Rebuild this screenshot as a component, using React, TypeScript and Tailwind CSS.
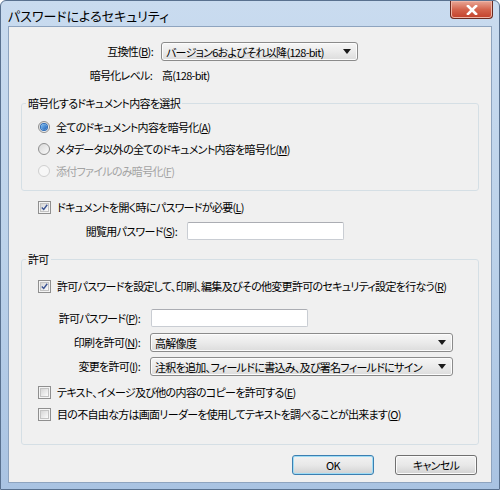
import React from "react";

function Combo({ value, width }: { value: string; width: string }) {
  return (
    <div
      className={`${width} h-[19px] flex items-center justify-between pl-[4px] pr-[6px] border border-[#8b8b8b] rounded-[3px] bg-gradient-to-b from-[#f6f6f6] via-[#ebebeb] to-[#dcdcdc] shadow-[inset_0_0_0_1px_#fcfcfc]`}
    >
      <span className="min-w-0 whitespace-nowrap leading-[16px]">{value}</span>
      <svg className="shrink-0" width="8" height="5" viewBox="0 0 8 5">
        <path d="M0 0h8L4 5z" fill="#1a1a1a" />
      </svg>
    </div>
  );
}

function TextBox({ width }: { width: string }) {
  return <div className={`${width} h-[18px] bg-white border border-[#c9cdd3] border-t-[#abadb3] rounded-[2px]`} />;
}

function CheckBox({ checked, label }: { checked?: boolean; label: React.ReactNode }) {
  return (
    <div className="h-[18px] flex items-center gap-[6px]">
      <div className="shrink-0 w-[13px] h-[13px] border border-[#8f8f8f] bg-[#f4f4f4] p-[1px]">
        <div className="w-full h-full border border-[#c3c3c3] bg-gradient-to-br from-[#d6d6d6] to-[#fbfbfb] flex items-center justify-center">
          {checked && (
            <svg width="9" height="9" viewBox="0 0 9 9">
              <path d="M1 4.5 L3.5 7 L8 1" fill="none" stroke="#3b5493" strokeWidth="1.8" />
            </svg>
          )}
        </div>
      </div>
      <span className="whitespace-nowrap">{label}</span>
    </div>
  );
}

function Radio({ checked, disabled, label }: { checked?: boolean; disabled?: boolean; label: React.ReactNode }) {
  return (
    <div className="h-[22px] flex items-center gap-[6px]">
      <div
        className={`shrink-0 w-[12px] h-[12px] rounded-full border ${disabled ? "border-[#cfcfcf] bg-[#f7f7f7]" : "border-[#8f8f8f] bg-gradient-to-br from-[#d8d8d8] to-[#fafafa]"} flex items-center justify-center`}
      >
        {checked && <div className="w-[6px] h-[6px] rounded-full bg-gradient-to-br from-[#83c2f5] to-[#1b5fb5] shadow-[0_0_0_1px_#2b6bb8]" />}
      </div>
      <span className={`whitespace-nowrap ${disabled ? "text-[#a3a3a3]" : ""}`}>{label}</span>
    </div>
  );
}

function Btn({ children, primary }: { children: React.ReactNode; primary?: boolean }) {
  return (
    <button
      className={`w-[82px] h-[20px] flex items-center justify-center rounded-[3px] border ${primary ? "border-[#3c7fb1] shadow-[inset_0_0_0_1px_#9fdcf5]" : "border-[#707070] shadow-[inset_0_0_0_1px_#fbfbfb]"} bg-gradient-to-b from-[#f2f2f2] via-[#e8e8e8] to-[#d2d2d2]`}
    >
      {children}
    </button>
  );
}

export default function App() {
  return (
    <div className="w-[500px] h-[490px] font-['Noto_Sans_CJK_JP',sans-serif] text-[11px] tracking-[-0.7px] leading-none text-black [font-feature-settings:'palt'] bg-gradient-to-b from-[#c9dbef] via-[#bcd2ea] to-[#a9c3e2] border border-[#59718f] rounded-t-[6px] flex flex-col overflow-hidden">
      {/* タイトルバー */}
      <div className="h-[25px] flex items-start justify-between pl-[7px] pr-[6px]">
        <span className="mt-[8px] text-[13px] tracking-normal text-black whitespace-nowrap">パスワードによるセキュリティ</span>
        <div className="w-[43px] h-[18px] rounded-b-[4px] border border-t-0 border-[#6b2a20] bg-gradient-to-b from-[#e8a797] via-[#d4644d] to-[#c2402a] shadow-[inset_0_0_0_1px_#f0b5a6] flex items-center justify-center">
          <svg width="12" height="10" viewBox="0 0 12 10">
            <path d="M2 1 L10 9 M10 1 L2 9" stroke="#fff" strokeWidth="2.6" strokeLinecap="square" />
          </svg>
        </div>
      </div>

      {/* クライアント領域 */}
      <div className="mx-[7px] mb-[6px] flex-1 bg-[#f0f0f0] border border-[#8ea4bf] flex flex-col">
        <div className="mt-[15px] flex items-center h-[19px]">
          <span className="w-[144px] text-right">互換性(<u>B</u>):</span>
          <div className="ml-[8px]">
            <Combo value="バージョン6およびそれ以降(128-bit)" width="w-[197px]" />
          </div>
        </div>
        <div className="mt-[6px] flex items-center h-[16px]">
          <span className="w-[143px] text-right">暗号化レベル:</span>
          <span className="ml-[10px]">高(128-bit)</span>
        </div>

        <fieldset className="mt-[12px] ml-[12px] w-[458px] border border-[#d5dfe5] rounded-[3px] pl-[16px] pt-[5px] pb-[8px]">
          <legend className="-ml-[12px] px-[2px] h-[16px] leading-[16px]">暗号化するドキュメント内容を選択</legend>
          <Radio checked label={<>全てのドキュメント内容を暗号化(<u>A</u>)</>} />
          <Radio label={<>メタデータ以外の全てのドキュメント内容を暗号化(<u>M</u>)</>} />
          <Radio disabled label={<>添付ファイルのみ暗号化(<u>F</u>)</>} />
        </fieldset>

        <div className="mt-[7px] ml-[29px]">
          <CheckBox checked label={<>ドキュメントを開く時にパスワードが必要(<u>L</u>)</>} />
        </div>
        <div className="mt-[6px] flex items-center">
          <span className="w-[168px] text-right">閲覧用パスワード(<u>S</u>):</span>
          <div className="ml-[10px]">
            <TextBox width="w-[157px]" />
          </div>
        </div>

        <fieldset className="mt-[11px] ml-[12px] w-[458px] border border-[#d5dfe5] rounded-[3px] pl-[16px] pt-[10px] pb-[21px]">
          <legend className="-ml-[12px] px-[2px] h-[16px] leading-[16px]">許可</legend>
          <CheckBox checked label={<>許可パスワードを設定して、印刷、編集及びその他変更許可のセキュリティ設定を行なう(<u>R</u>)</>} />
          <div className="mt-[14px] flex items-center -ml-[16px]">
            <span className="w-[118px] text-right">許可パスワード(<u>P</u>):</span>
            <div className="ml-[11px]">
              <TextBox width="w-[157px]" />
            </div>
          </div>
          <div className="mt-[6px] flex items-center -ml-[16px]">
            <span className="w-[118px] text-right">印刷を許可(<u>N</u>):</span>
            <div className="ml-[10px]">
              <Combo value="高解像度" width="w-[303px]" />
            </div>
          </div>
          <div className="mt-[5px] flex items-center -ml-[16px]">
            <span className="w-[118px] text-right">変更を許可(<u>I</u>):</span>
            <div className="ml-[10px]">
              <Combo value="注釈を追加、フィールドに書込み、及び署名フィールドにサイン" width="w-[303px]" />
            </div>
          </div>
          <div className="mt-[7px]">
            <CheckBox label={<>テキスト、イメージ及び他の内容のコピーを許可する(<u>E</u>)</>} />
          </div>
          <div className="mt-[4px]">
            <CheckBox label={<>目の不自由な方は画面リーダーを使用してテキストを調べることが出来ます(<u>O</u>)</>} />
          </div>
        </fieldset>

        <div className="mt-[10px] mr-[14px] flex justify-end gap-[21px]">
          <Btn primary>OK</Btn>
          <Btn>キャンセル</Btn>
        </div>
      </div>
    </div>
  );
}
